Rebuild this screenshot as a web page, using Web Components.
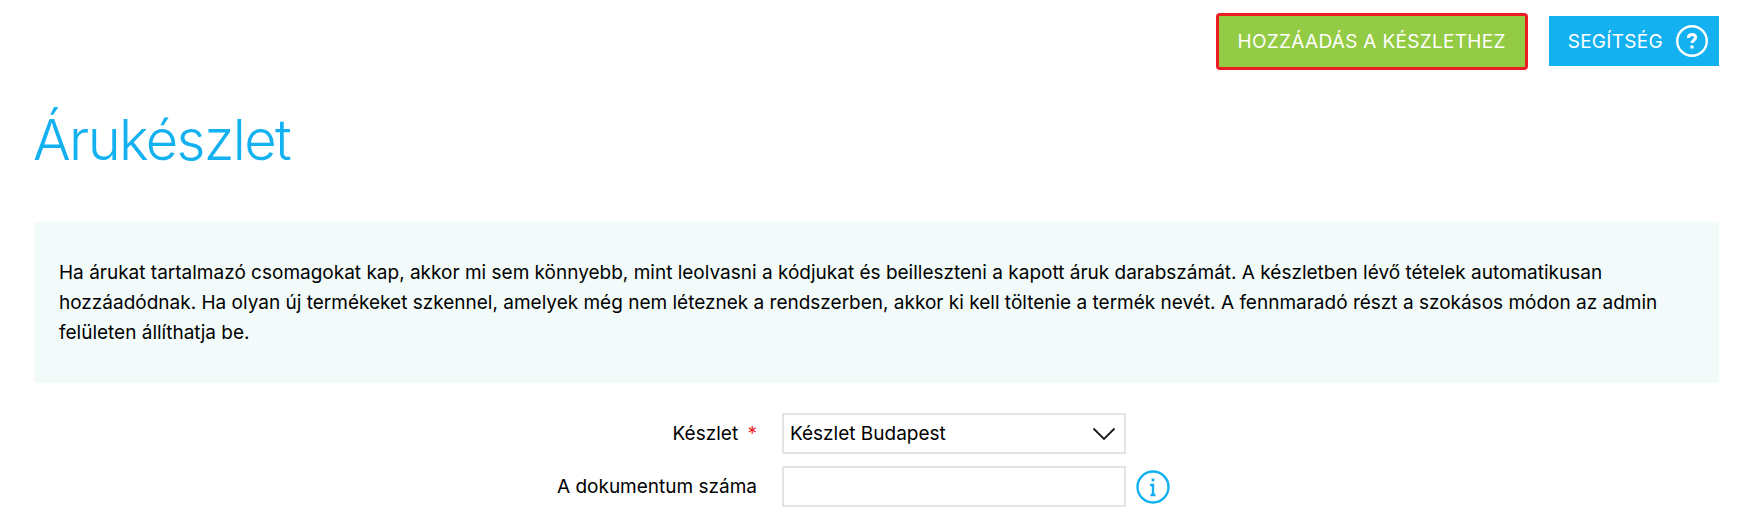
<!DOCTYPE html>
<html lang="hu">
<head>
<meta charset="utf-8">
<title>Árukészlet</title>
<style>
    html, body { margin: 0; padding: 0; background: #fff; }
    body { font-family: 'Inter', sans-serif; color: #000; overflow: hidden; height: 522px; }
</style>
</head>
<body>
<stock-page>
    <top-actions slot="actions"></top-actions>
    <page-title slot="title">Árukészlet</page-title>
    <info-box slot="info">Ha árukat tartalmazó csomagokat kap, akkor mi sem könnyebb, mint leolvasni a kódjukat és beilleszteni a kapott áruk darabszámát. A készletben lévő tételek automatikusan hozzáadódnak. Ha olyan új termékeket szkennel, amelyek még nem léteznek a rendszerben, akkor ki kell töltenie a termék nevét. A fennmaradó részt a szokásos módon az admin felületen állíthatja be.</info-box>
    <stock-form slot="form"></stock-form>
</stock-page>
<script>
class StockPage extends HTMLElement {
    connectedCallback() {
        this.attachShadow({ mode: 'open' });
        this.shadowRoot.innerHTML = `
            <style>
                :host { display: block; padding: 16px 37px 0 34px; }
                .form { margin-top: 30px; }
            </style>
            <slot name="actions"></slot>
            <slot name="title"></slot>
            <slot name="info"></slot>
            <div class="form"><slot name="form"></slot></div>
        `;
    }
}

class TopActions extends HTMLElement {
    connectedCallback() {
        this.attachShadow({ mode: 'open' });
        this.shadowRoot.innerHTML = `
            <style>
                :host { display: flex; justify-content: flex-end; align-items: center; gap: 24px; height: 50px; }
                .btn {
                    display: flex;
                    align-items: center;
                    box-sizing: border-box;
                    height: 50px;
                    color: #fff;
                    font: 400 19px 'Inter', sans-serif;
                    letter-spacing: 0.3px;
                    white-space: nowrap;
                }
                .add {
                    background: #93cb45;
                    height: 51px;
                    padding: 0 19px;
                    outline: 3px solid #ed1c24;
                    border-radius: 1px;
                }
                .help { background: #14b1f0; padding: 0 11px 0 19px; gap: 13px; }
                svg { display: block; }
            </style>
            <div class="btn add">HOZZÁADÁS A KÉSZLETHEZ</div>
            <div class="btn help">SEGÍTSÉG
                <svg width="32" height="32" viewBox="0 0 32 32" fill="none">
                    <circle cx="16" cy="16" r="14.800" stroke="#fff" stroke-width="2.400"/>
                    <path d="M12.400 13c0-2.400 1.500-3.600 3.600-3.600s3.600 1.200 3.600 3.100c0 2.700-3.600 2.500-3.600 5.600" stroke="#fff" stroke-width="3"/>
                    <rect x="14.500" y="20.500" width="3" height="3" fill="#fff"/>
                </svg>
            </div>
        `;
    }
}

class PageTitle extends HTMLElement {
    connectedCallback() {
        this.attachShadow({ mode: 'open' });
        this.shadowRoot.innerHTML = `
            <style>
                :host { display: block; margin-top: 41px; margin-bottom: 49px; }
                h1 { margin: 0 0 0 -1px; font: 340 56px/66px 'Inter', sans-serif; letter-spacing: -1.600px; color: #14b1f0; }
            </style>
            <h1><slot></slot></h1>
        `;
    }
}

class InfoBox extends HTMLElement {
    connectedCallback() {
        this.attachShadow({ mode: 'open' });
        this.shadowRoot.innerHTML = `
            <style>
                :host {
                    display: block;
                    box-sizing: border-box;
                    height: 161px;
                    background: #f2fbf9;
                    padding: 36px 24px 0 25px;
                    font: 400 19px/30px 'Inter', sans-serif;
                    color: #000;
                }
            </style>
            <slot></slot>
        `;
    }
}

class StockForm extends HTMLElement {
    connectedCallback() {
        this.attachShadow({ mode: 'open' });
        this.shadowRoot.innerHTML = `
            <style>
                :host {
                    display: grid;
                    grid-template-columns: 748px 344px 44px;
                    row-gap: 12px;
                    align-items: center;
                    font: 400 19px 'Inter', sans-serif;
                }
                label { text-align: right; padding-right: 25px; }
                .req { color: #ee1c25; margin-left: 4px; }
                .field {
                    box-sizing: border-box;
                    height: 41px;
                    border: 2px solid #e4e4e4;
                    background: #fff;
                    display: flex;
                    align-items: center;
                    justify-content: space-between;
                    padding: 0 8px 0 6px;
                }
                .icon { justify-self: end; display: block; }
            </style>
            <label>Készlet <span class="req">*</span></label>
            <div class="field">Készlet Budapest
                <svg width="24" height="14" viewBox="0 0 24 14" fill="none"><path d="M1.500 1.500l10.500 10.500 10.500-10.500" stroke="#1a1a1a" stroke-width="1.800"/></svg>
            </div>
            <div></div>
            <label>A dokumentum száma</label>
            <div class="field"></div>
            <svg class="icon" width="34" height="34" viewBox="0 0 34 34" fill="none">
                <circle cx="17" cy="17" r="15.500" stroke="#14b1f0" stroke-width="2.400"/>
                <rect x="15.600" y="8.500" width="2.800" height="2.800" fill="#14b1f0"/>
                <path d="M14 15h3v10.500M14.500 25h5" stroke="#14b1f0" stroke-width="2.400"/>
            </svg>
        `;
    }
}

customElements.define('stock-page', StockPage);
customElements.define('top-actions', TopActions);
customElements.define('page-title', PageTitle);
customElements.define('info-box', InfoBox);
customElements.define('stock-form', StockForm);
</script>
</body>
</html>
